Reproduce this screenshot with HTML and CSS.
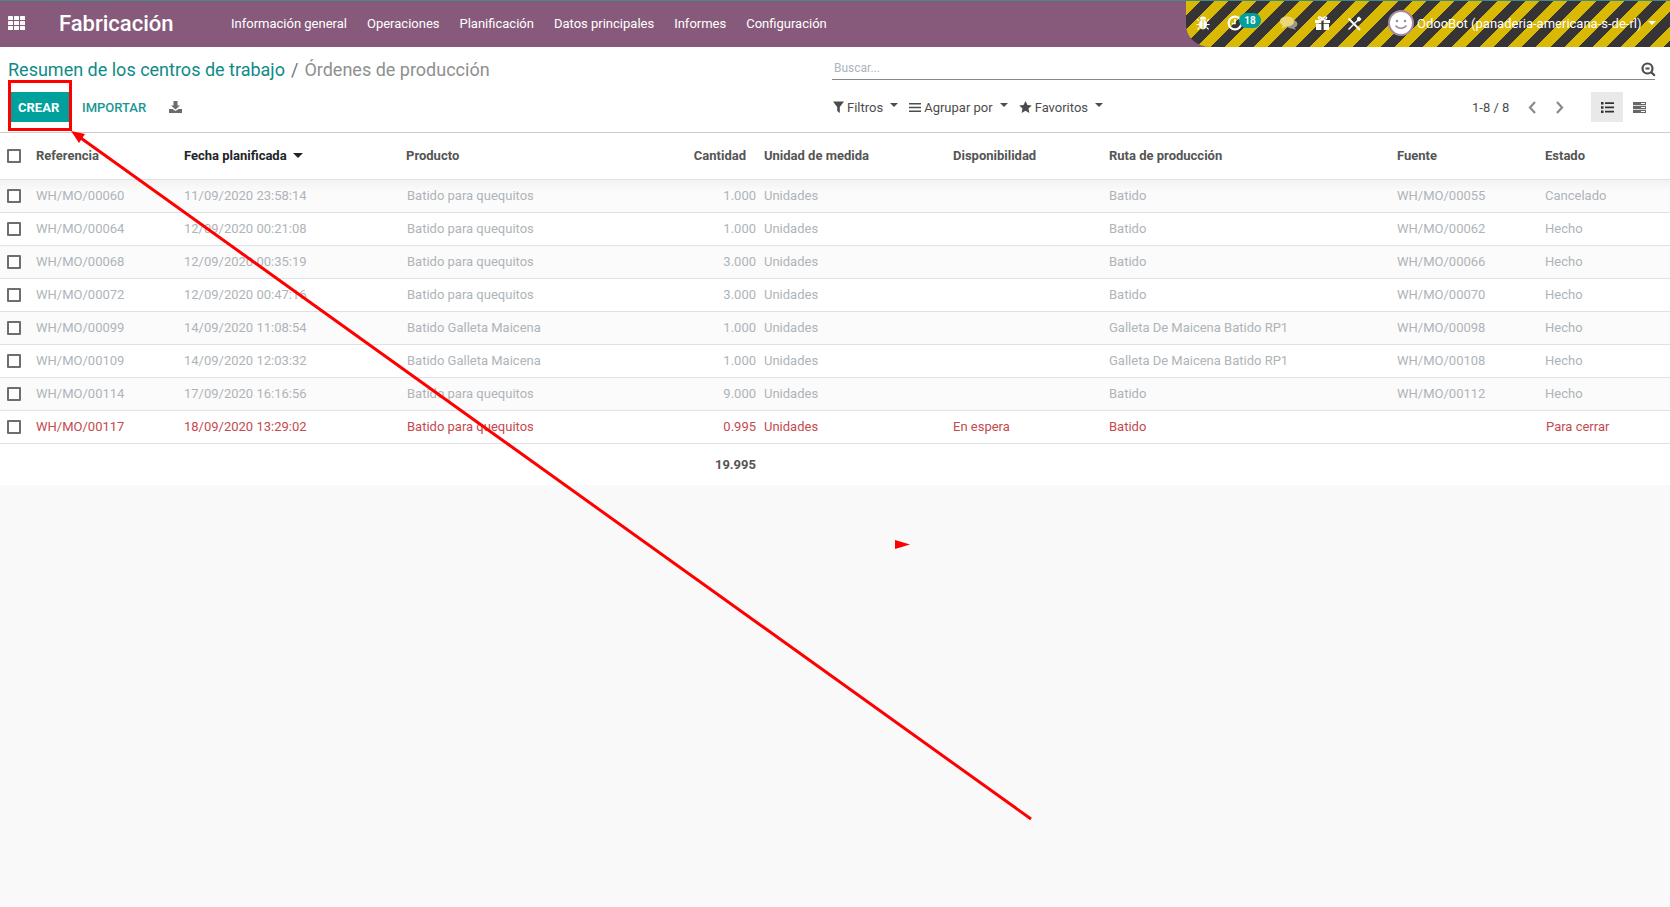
FILE: index.html
```html
<!DOCTYPE html>
<html lang="es">
<head>
<meta charset="utf-8">
<title>Órdenes de producción</title>
<link rel="stylesheet" href="styles.css">
</head>
<body>
<div class="page">
  <header class="navbar">
    <svg class="apps" viewBox="0 0 17 14" width="17" height="14"><g fill="#fff"><rect x="0" y="0" width="5" height="4" rx=".6"/><rect x="6" y="0" width="5" height="4" rx=".6"/><rect x="12" y="0" width="5" height="4" rx=".6"/><rect x="0" y="5" width="5" height="4" rx=".6"/><rect x="6" y="5" width="5" height="4" rx=".6"/><rect x="12" y="5" width="5" height="4" rx=".6"/><rect x="0" y="10" width="5" height="4" rx=".6"/><rect x="6" y="10" width="5" height="4" rx=".6"/><rect x="12" y="10" width="5" height="4" rx=".6"/></g></svg>
    <span class="brand">Fabricación</span>
    <nav class="menu">
      <a>Información general</a><a>Operaciones</a><a>Planificación</a><a>Datos principales</a><a>Informes</a><a>Configuración</a>
    </nav>
    <div class="systray">
      <svg class="sys bug" viewBox="0 0 14 14" width="14" height="14"><g fill="#fff"><ellipse cx="7" cy="8.500" rx="4" ry="5"/><path d="M3.800 3.600a3.200 3 0 0 1 6.400 0z"/></g><path d="M7 4v9" stroke="#d9b904" stroke-width=".8"/><g stroke="#fff" stroke-width="1.100" fill="none"><path d="M3 5 1 3.200M11 5l2-1.800M3 8.500H.4M11 8.500h2.600M3.400 11.500 1.300 13.400M10.600 11.500l2.100 1.900"/></g></svg>
      <span class="clock-wrap">
        <svg viewBox="0 0 16 16" width="16" height="16"><circle cx="8" cy="8" r="6.400" fill="none" stroke="#fff" stroke-width="2.200"/><path d="M8 4v4.500H5" fill="none" stroke="#fff" stroke-width="1.600"/></svg>
        <span class="badge">18</span>
      </span>
      <svg class="sys chat" viewBox="0 0 18 14" width="18" height="14"><ellipse cx="11.500" cy="8" rx="6" ry="4.400" fill="#9b9690"/><path d="m14 11 2 3-5-2z" fill="#9b9690"/><ellipse cx="7" cy="5.400" rx="7" ry="5" fill="#ecd777"/><path d="m3 9-1.500 3.500L7 10z" fill="#ecd777"/></svg>
      <svg class="sys gift" viewBox="0 0 15 14" width="15" height="14"><path fill="#fff" d="M0 4h6.400v3H0zM8.600 4H15v3H8.600zM1 7.800h5.400V14H1zM8.600 7.800H14V14H8.600z"/><path fill="none" stroke="#fff" stroke-width="1.400" d="M7.500 3.500C5 3.500 3.400 3 3.400 1.800S5 .6 6 1.400 7.500 3.500 7.500 3.500 8 2.200 9 1.400s2.600-.8 2.600.4-1.600 1.700-4.100 1.700"/></svg>
      <svg class="sys tools" viewBox="0 0 15 15" width="15" height="15"><g stroke="#fff" fill="none"><path stroke-width="1.500" d="M1.500 13.500 11 4"/><path stroke-width="1.900" d="M1.500 2.500 13 14"/></g><path fill="#fff" d="M10 2 12 .5l2.500 2.500L13 5l-1.500.5-1.500-1.500z"/></svg>
      <span class="avatar"><svg viewBox="0 0 26 26" width="26" height="26"><circle cx="13" cy="13" r="12" fill="#fff" stroke="#a58aa0" stroke-width="2"/><circle cx="9" cy="11" r="1.300" fill="#a58aa0"/><circle cx="17" cy="11" r="1.300" fill="#a58aa0"/><path d="M7.500 15.500c2.500 3.600 8.500 3.600 11 0" fill="none" stroke="#a58aa0" stroke-width="1.400"/></svg></span>
      <span class="user">OdooBot (panaderia-americana-s-de-rl)</span>
      <span class="caret white"></span>
    </div>
  </header>

  <section class="panel">
    <div class="panel-top">
      <div class="crumbs"><a>Resumen de los centros de trabajo</a><span class="sep">/</span><span class="cur">Órdenes de producción</span></div>
      <div class="search">
        <span class="ph">Buscar...</span>
        <svg viewBox="0 0 15 15" width="15" height="15"><circle cx="6.500" cy="6.500" r="5" fill="none" stroke="#4c4c4c" stroke-width="2.200"/><path d="M4.500 6.500h4M10 10l3.800 3.800" stroke="#4c4c4c" stroke-width="2.200" fill="none"/></svg>
      </div>
    </div>
    <div class="panel-bottom">
      <div class="actions">
        <button class="btn-create">CREAR</button>
        <button class="btn-import">IMPORTAR</button>
        <svg class="dl" viewBox="0 0 13 12" width="13" height="12"><path fill="#6b6b6b" d="M4.500 0h4v4.500H11L6.500 8.500 2 4.500h2.500zM0 8h3.500l3 2 3-2H13v4H0z"/></svg>
      </div>
      <div class="filters">
        <span class="fbtn"><svg viewBox="0 0 11 12" width="11" height="12"><path fill="#4c4c4c" d="M0 .5h11L6.800 6v6L4.200 10V6z"/></svg>Filtros<span class="caret"></span></span>
        <span class="fbtn"><svg viewBox="0 0 12 11" width="12" height="11"><path fill="#4c4c4c" d="M0 1h12v1.500H0zM0 4.700h12v1.500H0zM0 8.500h12V10H0z"/></svg>Agrupar por<span class="caret"></span></span>
        <span class="fbtn"><svg viewBox="0 0 13 12" width="13" height="12"><path fill="#4c4c4c" d="m6.500 0 1.900 4 4.400.5-3.300 3 .9 4.400-3.900-2.200-3.900 2.200.9-4.400L.2 4.500 4.600 4z"/></svg>Favoritos<span class="caret"></span></span>
      </div>
      <div class="pager">
        <span class="count">1-8 / 8</span>
        <svg class="chev" viewBox="0 0 9 13" width="9" height="13"><path d="M7 1 2 6.500 7 12" fill="none" stroke="#8a8a8a" stroke-width="2.200"/></svg>
        <svg class="chev" viewBox="0 0 9 13" width="9" height="13"><path d="M2 1l5 5.500L2 12" fill="none" stroke="#8a8a8a" stroke-width="2.200"/></svg>
      </div>
      <div class="views">
        <span class="view active"><svg viewBox="0 0 13 11" width="13" height="11"><path fill="#333" d="M0 0h2.500v2.500H0zM4 .3h9v1.800H4zM0 4.200h2.500v2.500H0zM4 4.500h9v1.800H4zM0 8.400h2.500v2.500H0zM4 8.700h9v1.800H4z"/></svg></span>
        <span class="view"><svg viewBox="0 0 13 11" width="13" height="11"><path fill="#666" d="M0 0h13v3.200H0zM0 4h13v3.200H0zM0 8h13v3H0z"/><path fill="#fff" d="M8 1h4v1H8zM8 5h4v1H8zM8 9h4v1H8z"/></svg></span>
      </div>
    </div>
  </section>

  <table class="list">
    <colgroup><col class="c0"><col class="c1"><col class="c2"><col class="c3"><col class="cq"><col class="c4"><col class="c5"><col class="c6"><col class="c7"><col class="c8"></colgroup>
    <thead>
      <tr>
        <th class="chk"><i class="box"></i></th><th>Referencia</th><th class="sorted">Fecha planificada<span class="caret dark"></span></th><th>Producto</th><th class="qty-h">Cantidad</th><th class="unit">Unidad de medida</th><th>Disponibilidad</th><th>Ruta de producción</th><th>Fuente</th><th>Estado</th>
      </tr>
    </thead>
    <tbody>
      <tr class="muted first"><td class="chk"><i class="box"></i></td><td>WH/MO/00060</td><td>11/09/2020 23:58:14</td><td class="pl">Batido para quequitos</td><td class="qty">1.000</td><td class="unit">Unidades</td><td></td><td>Batido</td><td>WH/MO/00055</td><td>Cancelado</td></tr>
      <tr class="muted"><td class="chk"><i class="box"></i></td><td>WH/MO/00064</td><td>12/09/2020 00:21:08</td><td class="pl">Batido para quequitos</td><td class="qty">1.000</td><td class="unit">Unidades</td><td></td><td>Batido</td><td>WH/MO/00062</td><td>Hecho</td></tr>
      <tr class="muted odd"><td class="chk"><i class="box"></i></td><td>WH/MO/00068</td><td>12/09/2020 00:35:19</td><td class="pl">Batido para quequitos</td><td class="qty">3.000</td><td class="unit">Unidades</td><td></td><td>Batido</td><td>WH/MO/00066</td><td>Hecho</td></tr>
      <tr class="muted"><td class="chk"><i class="box"></i></td><td>WH/MO/00072</td><td>12/09/2020 00:47:16</td><td class="pl">Batido para quequitos</td><td class="qty">3.000</td><td class="unit">Unidades</td><td></td><td>Batido</td><td>WH/MO/00070</td><td>Hecho</td></tr>
      <tr class="muted odd"><td class="chk"><i class="box"></i></td><td>WH/MO/00099</td><td>14/09/2020 11:08:54</td><td class="pl">Batido Galleta Maicena</td><td class="qty">1.000</td><td class="unit">Unidades</td><td></td><td>Galleta De Maicena Batido RP1</td><td>WH/MO/00098</td><td>Hecho</td></tr>
      <tr class="muted"><td class="chk"><i class="box"></i></td><td>WH/MO/00109</td><td>14/09/2020 12:03:32</td><td class="pl">Batido Galleta Maicena</td><td class="qty">1.000</td><td class="unit">Unidades</td><td></td><td>Galleta De Maicena Batido RP1</td><td>WH/MO/00108</td><td>Hecho</td></tr>
      <tr class="muted odd"><td class="chk"><i class="box"></i></td><td>WH/MO/00114</td><td>17/09/2020 16:16:56</td><td class="pl">Batido para quequitos</td><td class="qty">9.000</td><td class="unit">Unidades</td><td></td><td>Batido</td><td>WH/MO/00112</td><td>Hecho</td></tr>
      <tr class="danger"><td class="chk"><i class="box"></i></td><td>WH/MO/00117</td><td>18/09/2020 13:29:02</td><td class="pl">Batido para quequitos</td><td class="qty">0.995</td><td class="unit">Unidades</td><td>En espera</td><td>Batido</td><td></td><td class="pl">Para cerrar</td></tr>
    </tbody>
    <tfoot>
      <tr><td colspan="4"></td><td class="qty total">19.995</td><td colspan="5"></td></tr>
    </tfoot>
  </table>

  <svg class="overlay" viewBox="0 0 1670 907" width="1670" height="907">
    <rect x="9.500" y="81.500" width="61" height="48" fill="none" stroke="#f00" stroke-width="3"/>
    <line x1="1031" y1="819" x2="78" y2="136" stroke="#f00" stroke-width="3"/>
    <polygon points="71,131 85,134 79,143" fill="#f00"/>
    <polygon points="895,540 910,544.500 895,549" fill="#f00"/>
  </svg>
</div>
</body>
</html>
```
FILE: styles.css
```css
* { box-sizing: border-box; }
html, body { margin: 0; padding: 0; }
body {
  font-family: Roboto, "Liberation Sans", sans-serif;
  font-size: 13px;
  color: #4c4c4c;
  background: #f9f9f9;
}
.page {
  position: relative;
  width: 1670px;
  height: 907px;
  overflow: hidden;
}

/* navbar */
.navbar {
  display: flex;
  align-items: center;
  height: 47px;
  padding-bottom: 2px;
  background: #875a7b;
  border-top: 1px solid #3f8b85;
  color: #fff;
}
.apps { margin-left: 8px; flex: none; }
.brand {
  margin-left: 34px;
  font-size: 22px;
  font-weight: 500;
  width: 172px;
  flex: none;
}
.menu { display: flex; gap: 20px; flex: none; }
.menu a { color: #fff; white-space: nowrap; }
.systray {
  margin-left: auto;
  width: 484px;
  height: 46px;
  align-self: flex-start;
  display: flex;
  align-items: center;
  padding: 0 0 2px 10px;
  border-bottom-left-radius: 24px 22px;
  background: repeating-linear-gradient(135deg, #d9b904 0, #d9b904 10px, #373435 10px, #373435 20px);
}
.sys { flex: none; }
.clock-wrap { display: flex; margin-left: 17px; position: relative; width: 36px; height: 22px; align-items: center; }
.badge {
  position: absolute;
  left: 12px;
  top: 1px;
  width: 22px;
  height: 15px;
  border-radius: 8px;
  background: #00a09d;
  font-size: 10px;
  font-weight: 700;
  line-height: 15px;
  text-align: center;
  color: #fff;
}
.chat { margin-left: 17px; }
.gift { margin-left: 17px; }
.tools { margin-left: 17px; }
.avatar { display: flex; margin-left: 26px; flex: none; }
.user { margin-left: 3px; white-space: nowrap; }
.caret {
  display: inline-block;
  width: 0;
  height: 0;
  margin-left: 7px;
  border-left: 4px solid transparent;
  border-right: 4px solid transparent;
  border-top: 4px solid #4c4c4c;
  vertical-align: 3px;
}
.caret.white { border-top-color: #fff; margin-left: 6px; }
.caret.dark { border-top-color: #212529; margin-left: 6px; border-width: 5px 5px 0; vertical-align: 2px; }

/* control panel */
.panel {
  background: #fff;
  border-bottom: 1px solid #ccc;
  height: 86px;
  padding: 0 15px 0 8px;
}
.panel-top { display: flex; height: 41px; align-items: flex-start; }
.crumbs {
  width: 824px;
  margin-top: 9px;
  font-size: 18px;
  line-height: 27px;
  white-space: nowrap;
  flex: none;
}
.crumbs a { color: #0e8b88; }
.sep { margin: 0 6px; color: #6c757d; }
.cur { color: #8f8f8f; }
.search {
  flex: 1;
  display: flex;
  justify-content: space-between;
  align-items: center;
  height: 26px;
  margin-top: 7px;
  border-bottom: 1px solid #888;
}
.ph { color: #adb5bd; font-size: 12px; margin: 2px 0 0 2px; }
.search svg { margin: 5px -1px 0 0; }
.panel-bottom { display: flex; align-items: center; height: 30px; margin-top: 4px; }
.actions { display: flex; align-items: center; width: 824px; flex: none; padding-left: 2px; }
.btn-create, .btn-import {
  border: 0;
  font: 700 13px Roboto, "Liberation Sans", sans-serif;
  height: 30px;
  padding: 0;
}
.btn-create { width: 59px; background: #00a09d; color: #fff; text-align: left; padding-left: 8px; }
.btn-import { margin-left: 13px; background: transparent; color: #1a9794; font-weight: 500; }
.dl { margin-left: 23px; }
.filters { display: flex; gap: 11px; flex: none; width: 640px; padding-left: 1px; }
.fbtn { display: flex; align-items: center; gap: 3px; white-space: nowrap; }
.fbtn .caret { margin-left: 4px; margin-top: -4px; }
.pager { display: flex; align-items: center; width: 118px; flex: none; }
.count { width: 56px; flex: none; }
.chev { margin-right: 18px; flex: none; }
.views { display: flex; margin-left: auto; }
.view { display: flex; align-items: center; justify-content: center; width: 32px; height: 30px; }
.view.active { background: #e9e9e9; }

/* list */
.list {
  width: 1670px;
  table-layout: fixed;
  border-collapse: collapse;
  background: #fff;
}
.c0 { width: 36px; }
.c1 { width: 148px; }
.c2 { width: 222px; }
.c3 { width: 250px; }
.cq { width: 100px; }
.c4 { width: 197px; }
.c5 { width: 156px; }
.c6 { width: 288px; }
.c7 { width: 148px; }
.c8 { width: 125px; }
.list th, .list td { padding: 0; white-space: nowrap; text-align: left; }
.list th {
  height: 46px;
  font-weight: 700;
  color: #555;
  border-bottom: 1px solid #dee2e6;
}
.list th.sorted { color: #212529; }
.list th.qty-h { text-align: right; padding-right: 10px; }
.list td { height: 33px; border-bottom: 1px solid #dee2e6; }
.list td.pl { padding-left: 1px; }
.list td.qty { text-align: right; }
.list .unit { padding-left: 8px; }
.list tbody tr.odd { background: #fbfbfb; }
.list tbody tr.first { background: linear-gradient(#f1f1f1, #fbfbfb 12px); }
.muted td { color: #aeb4b9; }
.danger td { color: #c44a4f; }
.list .chk { padding-left: 7px; }
.box {
  display: block;
  width: 14px;
  height: 14px;
  border: 2px solid #6e6e6e;
  border-radius: 1px;
  background: #fff;
}
.list tfoot td { height: 42px; border-bottom: 0; }
.list td.total { font-weight: 700; color: #555; }

/* annotations drawn over the screenshot */
.overlay {
  position: absolute;
  left: 0;
  top: 0;
  pointer-events: none;
}
```
